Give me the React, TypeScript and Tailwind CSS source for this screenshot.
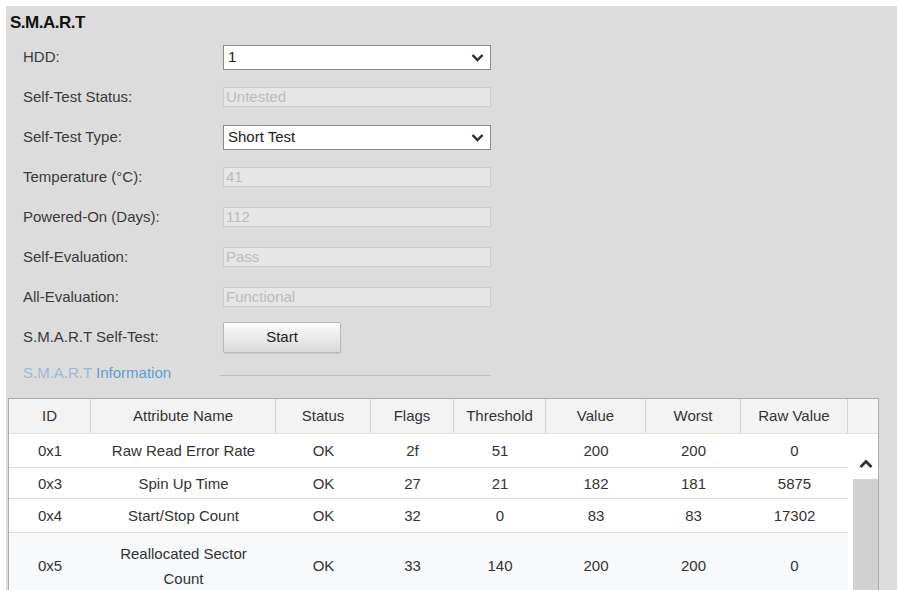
import React from 'react';

type Field =
  | { label: string; kind: 'select'; value: string }
  | { label: string; kind: 'text'; value: string }
  | { label: string; kind: 'button'; value: string };

const fields: Field[] = [
  { label: 'HDD:', kind: 'select', value: '1' },
  { label: 'Self-Test Status:', kind: 'text', value: 'Untested' },
  { label: 'Self-Test Type:', kind: 'select', value: 'Short Test' },
  { label: 'Temperature (°C):', kind: 'text', value: '41' },
  { label: 'Powered-On (Days):', kind: 'text', value: '112' },
  { label: 'Self-Evaluation:', kind: 'text', value: 'Pass' },
  { label: 'All-Evaluation:', kind: 'text', value: 'Functional' },
  { label: 'S.M.A.R.T Self-Test:', kind: 'button', value: 'Start' },
];

const columns = [
  { name: 'ID', w: 'w-[82px]' },
  { name: 'Attribute Name', w: 'w-[185px]' },
  { name: 'Status', w: 'w-[95px]' },
  { name: 'Flags', w: 'w-[83px]' },
  { name: 'Threshold', w: 'w-[92px]' },
  { name: 'Value', w: 'w-[100px]' },
  { name: 'Worst', w: 'w-[95px]' },
  { name: 'Raw Value', w: 'w-[107px]' },
];

const rows = [
  { h: 'h-[34px]', bg: 'bg-white', cells: ['0x1', 'Raw Read Error Rate', 'OK', '2f', '51', '200', '200', '0'] },
  { h: 'h-[31px]', bg: 'bg-white', cells: ['0x3', 'Spin Up Time', 'OK', '27', '21', '182', '181', '5875'] },
  { h: 'h-[34px]', bg: 'bg-white', cells: ['0x4', 'Start/Stop Count', 'OK', '32', '0', '83', '83', '17302'] },
  { h: 'h-[66px]', bg: 'bg-[#f7f9fb]', cells: ['0x5', 'Reallocated Sector Count', 'OK', '33', '140', '200', '200', '0'] },
];

const Chevron = () => (
  <svg width="13" height="9" viewBox="0 0 13 9" className="shrink-0">
    <path d="M1.5 2 L6.5 7 L11.5 2" fill="none" stroke="#2a2a2a" strokeWidth="2.4" />
  </svg>
);

const Control = ({ field }: { field: Field }) => {
  if (field.kind === 'select') {
    return (
      <div className="w-[268px] h-[25px] bg-white border border-[#8a8a8a] flex items-center justify-between pl-[4px] pr-[6px] text-[15px] text-[#222]">
        <span>{field.value}</span>
        <Chevron />
      </div>
    );
  }
  if (field.kind === 'button') {
    return (
      <div className="w-[118px] h-[31px] rounded-[2px] border border-[#b8b8b8] bg-gradient-to-b from-[#fbfbfb] to-[#dadada] shadow-[0_1px_1px_rgba(0,0,0,0.08)] flex items-center justify-center text-[15px] text-[#222]">
        {field.value}
      </div>
    );
  }
  return (
    <div className="w-[268px] h-[20px] bg-[#e6e6e6] border border-[#cccccc] flex items-center pl-[2px] text-[15px] text-[#bcbcbc]">
      {field.value}
    </div>
  );
};

export default function App() {
  return (
    <div className="w-[898px] h-[590px] bg-white pt-[6px] pl-[6px] overflow-hidden" style={{ fontFamily: '"Liberation Sans", Arial, sans-serif' }}>
      <div className="w-[891px] h-[600px] bg-[#dcdcdc] overflow-hidden">
        <div className="pt-[8px] pl-[4px] text-[17px] leading-[18px] font-bold text-[#111] tracking-[-0.5px]">S.M.A.R.T</div>

        <div className="mt-[5px]">
          {fields.map((f) => (
            <div key={f.label} className="h-[40px] flex items-center pl-[17px]">
              <div className="w-[200px] text-[15px] text-[#3a3a3a]">{f.label}</div>
              <Control field={f} />
            </div>
          ))}
        </div>

        <div className="h-[33px] flex items-center pl-[17px]">
          <div className="w-[197px] text-[15px]">
            <span className="text-[#9cb8d0]">S.M.A.R.T </span>
            <span className="text-[#5f9fd3]">Information</span>
          </div>
          <div className="w-[271px] h-px bg-[#c0c0c0] mt-[4px]" />
        </div>

        <div className="ml-[2px] mt-[8px] w-[871px] border border-[#a7aeb6] bg-white text-[15px] text-[#333]">
          <div className="flex h-[35px] bg-[#f3f3f3] border-b border-[#dfe6cf]">
            {columns.map((c) => (
              <div key={c.name} className={`${c.w} flex items-center justify-center border-r border-[#d4d4d4]`}>
                {c.name}
              </div>
            ))}
            <div className="flex-1" />
          </div>
          <div className="flex">
            <div className="w-[839px]">
              {rows.map((r) => (
                <div key={r.cells[0]} className={`flex ${r.h} ${r.bg} border-b border-[#dcdcdc]`}>
                  {r.cells.map((cell, i) => (
                    <div key={i} className={`${columns[i].w} flex items-center justify-center text-center leading-[25px] px-[18px]`}>
                      {cell}
                    </div>
                  ))}
                </div>
              ))}
            </div>
            <div className="flex-1 flex flex-col bg-white">
              <div className="h-[45px] flex items-end justify-center pl-[6px] pb-[10px]">
                <svg width="14" height="10" viewBox="0 0 14 10">
                  <path d="M1.5 8 L7 2.5 L12.5 8" fill="none" stroke="#333" strokeWidth="2.8" />
                </svg>
              </div>
              <div className="flex-1 ml-[5px] bg-[#d2d2d2] min-h-[120px]" />
            </div>
          </div>
        </div>
      </div>
    </div>
  );
}
